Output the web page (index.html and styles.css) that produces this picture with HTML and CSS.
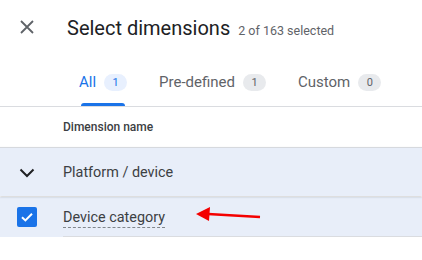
FILE: index.html
```html
<!DOCTYPE html>
<html lang="en">
<head>
    <meta charset="UTF-8">
    <meta name="viewport" content="width=device-width, initial-scale=1.0">
    <title>Select dimensions</title>
    <link rel="stylesheet" href="styles.css">
</head>
<body>
    <div class="panel">
        <div class="header">
            <span class="close">
                <svg width="14" height="14" viewBox="0 0 14 14"><path d="M1 1L13 13M13 1L1 13" stroke="#5f6368" stroke-width="1.8" fill="none"/></svg>
            </span>
            <h1>Select dimensions</h1>
            <span class="count">2 of 163 selected</span>
        </div>

        <div class="tabs">
            <span class="tab active-tab">All <span class="badge">1</span></span>
            <span class="tab">Pre-defined <span class="badge">1</span></span>
            <span class="tab">Custom <span class="badge">0</span></span>
        </div>

        <div class="table">
            <div class="head-row">Dimension name</div>
            <div class="row group-row">
                <span class="icon-cell">
                    <svg width="16" height="10" viewBox="0 0 16 10"><path d="M1.5 1.5L8 8L14.5 1.5" stroke="#202124" stroke-width="2" fill="none"/></svg>
                </span>
                <span class="name">Platform / device</span>
            </div>
            <div class="row item-row">
                <span class="icon-cell">
                    <span class="checkbox">
                        <svg width="20" height="20" viewBox="0 0 20 20"><path d="M5 10.2L8.4 13.4L15 6.8" stroke="#fff" stroke-width="2" fill="none"/></svg>
                    </span>
                </span>
                <span class="name dashed">Device category</span>
                <svg class="arrow" width="80" height="20" viewBox="0 0 80 20"><path d="M66 12L14 9" stroke="#f40000" stroke-width="2.4" fill="none"/><path d="M2 9L16 2L15 16Z" fill="#f40000"/></svg>
            </div>
        </div>
    </div>
</body>
</html>
```

FILE: styles.css
```css
body {
    margin: 0;
    font-family: Roboto, "Noto Sans", Arial, sans-serif;
    background-color: #fff;
    color: #3c4043;
}
.panel {
    width: 422px;
}
.header {
    display: flex;
    align-items: baseline;
    height: 54px;
    padding-top: 16px;
    box-sizing: border-box;
}
.close {
    width: 67px;
    padding-left: 20px;
    box-sizing: border-box;
    align-self: flex-start;
    display: flex;
    margin-top: 4px;
}
h1 {
    margin: 0;
    font-size: 20px;
    font-weight: 400;
    color: #202124;
}
.count {
    margin-left: 8px;
    font-size: 12.5px;
    color: #5f6368;
}
.tabs {
    display: flex;
    gap: 32px;
    padding-left: 79px;
    margin-top: 8px;
    border-bottom: 1px solid #dadce0;
}
.tab {
    display: flex;
    align-items: center;
    gap: 8px;
    height: 44px;
    padding-bottom: 4px;
    box-sizing: border-box;
    font-size: 15px;
    color: #5f6368;
    position: relative;
}
.active-tab {
    color: #1a73e8;
}
.active-tab::after {
    content: "";
    position: absolute;
    left: 2px;
    right: 2px;
    bottom: 0;
    height: 3px;
    background-color: #1a73e8;
    border-radius: 3px 3px 0 0;
}
.badge {
    display: inline-block;
    width: 23px;
    height: 17px;
    line-height: 17px;
    text-align: center;
    border-radius: 9px;
    font-size: 11px;
    background-color: #e8eaed;
    color: #5f6368;
}
.active-tab .badge {
    background-color: #e8f0fe;
    color: #1a73e8;
}
.head-row {
    height: 40px;
    line-height: 41px;
    padding-left: 63px;
    font-size: 12px;
    font-weight: 500;
    color: #3c4043;
}
.row {
    display: flex;
    align-items: center;
    background-color: #e8eef9;
    position: relative;
}
.group-row {
    height: 48px;
    border-top: 1px solid #d6d9de;
    box-shadow: 0 1px 2px rgba(60, 64, 67, 0.25);
    z-index: 1;
}
.item-row {
    height: 40px;
    margin-top: 1px;
}
.item-row::after {
    content: "";
    position: absolute;
    left: 63px;
    right: 0;
    bottom: 0;
    height: 1px;
    background-color: #dadce0;
}
.icon-cell {
    width: 63px;
    display: flex;
    padding-left: 19px;
    box-sizing: border-box;
}
.group-row .icon-cell {
    padding-left: 19px;
    padding-top: 2px;
}
.item-row .icon-cell {
    padding-left: 17px;
}
.checkbox {
    display: flex;
    width: 20px;
    height: 20px;
    background-color: #1a73e8;
    border-radius: 2px;
}
.name {
    font-size: 14.4px;
    color: #3c4043;
}
.dashed {
    border-bottom: 1px dashed #80868b;
    line-height: 18px;
    margin-top: 2px;
}
.arrow {
    position: absolute;
    left: 194px;
    top: 8px;
}
```
